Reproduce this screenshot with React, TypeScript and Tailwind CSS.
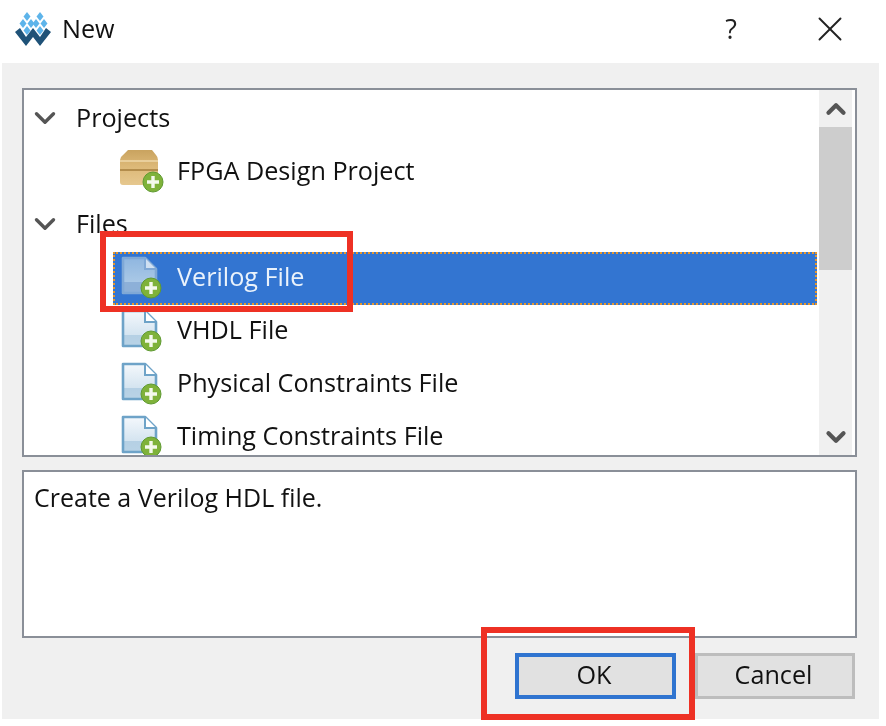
import { ChevronDown, ChevronUp, X } from 'lucide-react';

const files = ['Verilog File', 'VHDL File', 'Physical Constraints File', 'Timing Constraints File'];

function PlusBadge({ cx, cy }: { cx: number; cy: number }) {
  return (
    <g>
      <circle cx={cx} cy={cy} r="10" fill="#7fb23a" stroke="#5f9a32" strokeWidth="1" />
      <path d={`M${cx - 6} ${cy}H${cx + 6}M${cx} ${cy - 6}V${cy + 6}`} stroke="#f4f9ec" strokeWidth="3.4" />
    </g>
  );
}

function FileIcon({ selected }: { selected: boolean }) {
  const id = selected ? 'fileSel' : 'filePlain';
  const edge = selected ? '#7fa8d6' : '#6ea3c8';
  return (
    <svg width="44" height="46" viewBox="0 0 44 46" className="shrink-0">
      <defs>
        <linearGradient id={id} x1="0" y1="0" x2="0" y2="1">
          <stop offset="0" stopColor={selected ? '#8fb6e0' : '#f4f8fc'} />
          <stop offset="0.68" stopColor={selected ? '#a9c8e6' : '#d4e4f0'} />
          <stop offset="0.7" stopColor={selected ? '#8db0d8' : '#b5d0e4'} />
          <stop offset="1" stopColor={selected ? '#8db0d8' : '#b9d3e6'} />
        </linearGradient>
      </defs>
      <path d="M2 2H24L35 13V37H2Z" fill={`url(#${id})`} stroke={edge} strokeWidth="2.6" strokeLinejoin="round" />
      <path d="M24 2V13H35" fill={selected ? '#cfe0f2' : '#fff'} stroke={edge} strokeWidth="2" />
      <PlusBadge cx={30} cy={32} />
    </svg>
  );
}

function BoxIcon() {
  return (
    <svg width="46" height="48" viewBox="0 0 46 48" className="shrink-0">
      <defs>
        <linearGradient id="box" x1="0" y1="0" x2="0" y2="1">
          <stop offset="0" stopColor="#c9a35f" />
          <stop offset="0.45" stopColor="#dcb877" />
          <stop offset="1" stopColor="#e6c88f" />
        </linearGradient>
      </defs>
      <path d="M1 11Q1 8 4 6L9 1H33L37 6Q39 8 39 11V33Q39 36 36 36H4Q1 36 1 33Z" fill="url(#box)" />
      <path d="M1 11H39V13H1Z" fill="#e9cf9c" />
      <path d="M1 20H39V22H1Z" fill="#b38d4c" />
      <PlusBadge cx={34} cy={33} />
    </svg>
  );
}

function Logo() {
  const diamonds = [
    'M12 0L15.5 4.5L12 9L8.5 4.5Z',
    'M25 0L28.5 4.5L25 9L21.5 4.5Z',
    'M8 7L11.5 11.5L8 16L4.5 11.5Z',
    'M16 7L19.5 11.5L16 16L12.5 11.5Z',
    'M21 7L24.5 11.5L21 16L17.5 11.5Z',
    'M29 7L32.5 11.5L29 16L25.5 11.5Z',
    'M12 14L15.5 18.5L12 23L8.5 18.5Z',
    'M25 14L28.5 18.5L25 23L21.5 18.5Z',
  ];
  return (
    <svg width="36" height="34" viewBox="0 0 36 34" className="shrink-0">
      {diamonds.map((d) => (
        <path key={d} d={d} fill="#5db4ea" />
      ))}
      <path d="M0 20L11 34L18 25L25 34L36 20L31 16L25 25L18 16L11 25L5 16Z" fill="#1f5278" />
    </svg>
  );
}

export default function App() {
  return (
    <div
      className="relative h-[726px] w-[886px] overflow-hidden bg-white text-[25.2px] leading-none text-[#111] blur-[0.7px]"
      style={{ fontFamily: '"Open Sans", "Noto Sans", sans-serif' }}
    >
      <div className="flex h-[63px] items-center pb-[6px] pl-[15px] pr-[35px]">
        <Logo />
        <span className="ml-[11px]">New</span>
        <span className="ml-auto text-[27px] text-[#222]">?</span>
        <X className="ml-[72px] h-[42px] w-[42px] text-[#222]" strokeWidth={1.1} />
      </div>

      <div className="ml-[2px] flex h-[656px] w-[877px] flex-col bg-[#f0f0f0] pl-[20px] pr-[22px] pt-[25px]">
        <div className="flex h-[369px] overflow-hidden border-2 border-[#8a8f98] bg-white">
          <div className="min-w-0 flex-1 pt-[3px]">
            <div className="flex h-[53px] items-center pb-[4px] pl-[4px]">
              <ChevronDown className="h-[34px] w-[34px] text-[#555]" strokeWidth={2.4} />
              <span className="ml-[14px]">Projects</span>
            </div>
            <div className="flex h-[53px] items-center pl-[95px]">
              <BoxIcon />
              <span className="mb-[4px] ml-[12px]">FPGA Design Project</span>
            </div>
            <div className="flex h-[53px] items-center pb-[4px] pl-[4px]">
              <ChevronDown className="h-[34px] w-[34px] text-[#555]" strokeWidth={2.4} />
              <span className="ml-[14px]">Files</span>
            </div>
            {files.map((name, i) => (
              <div
                key={name}
                className={
                  i === 0
                    ? 'ml-[89px] mr-[2px] flex h-[53px] items-center border-2 border-dotted border-[#e8972c] bg-[#3375d1] pl-[6px] text-[#eaf2fb]'
                    : 'ml-[90px] flex h-[53px] items-center pl-[7px]'
                }
              >
                <FileIcon selected={i === 0} />
                <span className="mb-[4px] ml-[12px]">{name}</span>
              </div>
            ))}
          </div>
          <div className="mr-[3px] flex w-[33px] shrink-0 flex-col bg-[#f0f0f0]">
            <div className="flex h-[37px] items-center justify-center">
              <ChevronUp className="h-[30px] w-[30px] text-[#555]" strokeWidth={3.4} />
            </div>
            <div className="h-[143px] bg-[#cdcdcd]" />
            <div className="mt-auto flex h-[37px] items-center justify-center">
              <ChevronDown className="h-[30px] w-[30px] text-[#555]" strokeWidth={3.4} />
            </div>
          </div>
        </div>

        <div className="mt-[13px] h-[168px] border-2 border-[#8a8f98] bg-white pl-[10px] pt-[13px] text-[25px]">
          Create a Verilog HDL file.
        </div>

        <div className="mt-[15px] flex justify-end pr-[2px]">
          <button className="h-[46px] w-[161px] border-[4px] border-[#2f74d0] bg-[#e1e1e1] pb-[2px] pr-[3px] text-[#111]">OK</button>
          <button className="ml-[19px] h-[46px] w-[160px] border-[3px] border-[#bdbdbd] bg-[#e1e1e1] pb-[2px] pr-[3px] text-[#111]">Cancel</button>
        </div>
      </div>

      <div className="absolute left-[100px] top-[231px] h-[81px] w-[253px] border-[6px] border-[#ee3124]" />
      <div className="absolute left-[481px] top-[627px] h-[93px] w-[214px] border-[6px] border-[#ee3124]" />
    </div>
  );
}
